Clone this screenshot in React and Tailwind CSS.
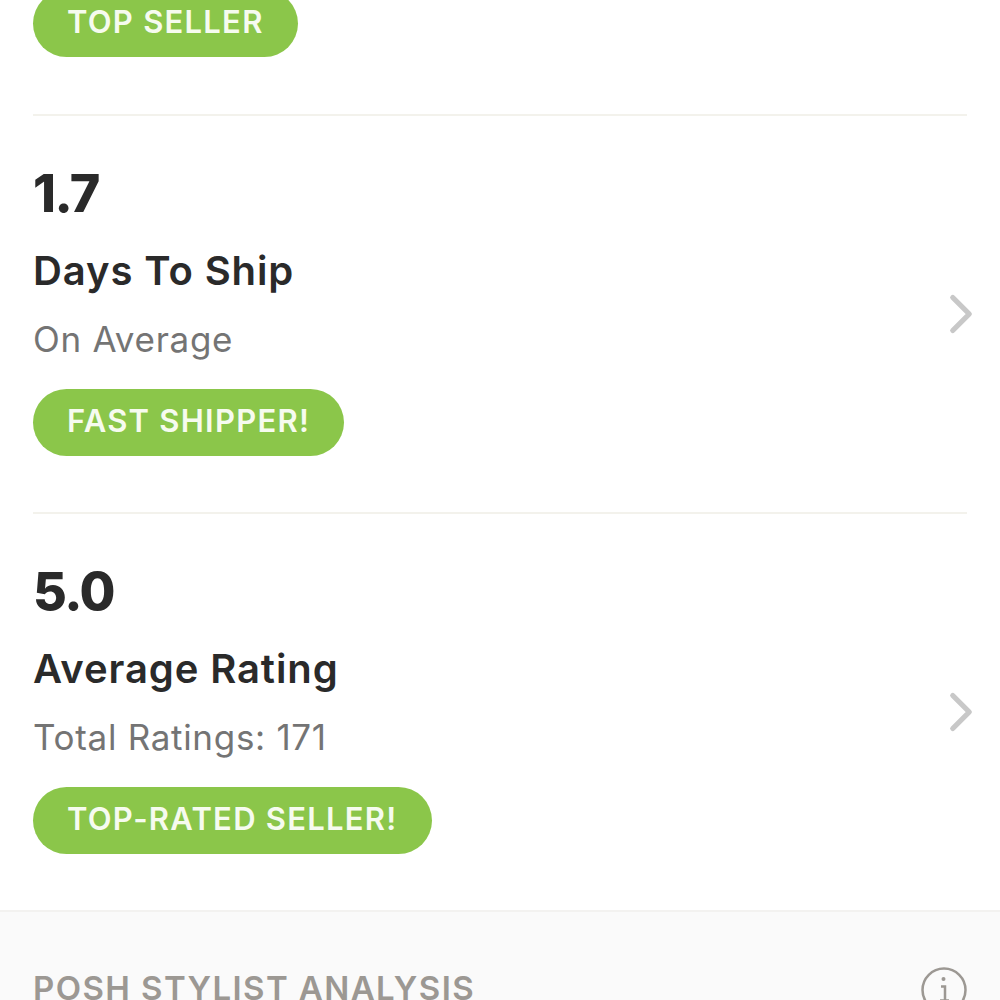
import { ChevronRight } from 'lucide-react'

const STATS = [
  { value: '1.7', title: 'Days To Ship', sub: 'On Average', badge: 'FAST SHIPPER!' },
  { value: '5.0', title: 'Average Rating', sub: 'Total Ratings: 171', badge: 'TOP-RATED SELLER!' },
]

function Badge({ children }) {
  return (
    <span className="inline-flex h-[67px] items-center rounded-full bg-[#8bc64a] px-[34px] pb-[3px] text-[31px] font-semibold tracking-[1.25px] text-[#f6fbef]">
      {children}
    </span>
  )
}

function StatRow({ stat }) {
  return (
    <div className="relative flex h-[398px] flex-col items-start border-t-2 border-[#f3f2ec] pt-[48px]">
      <div className="h-[60px] text-[52px] leading-[60px] font-extrabold tracking-[-1.5px] text-[#2a2a2a]">{stat.value}</div>
      <div className="mt-[23px] h-[48px] text-[40px] leading-[48px] font-semibold tracking-[0.9px] text-[#2a2a2a]">{stat.title}</div>
      <div className="mt-[22px] h-[44px] text-[35px] leading-[44px] tracking-[0.7px] text-[#747474]">{stat.sub}</div>
      <div className="mt-[28px]">
        <Badge>{stat.badge}</Badge>
      </div>
      <ChevronRight
        className="absolute top-[165px] right-[-27px] h-[66px] w-[66px] text-[#c8c8c8]"
        strokeWidth={1.9}
      />
    </div>
  )
}

export default function App() {
  return (
    <div className="h-[1000px] w-[1000px] overflow-hidden bg-white font-['Inter','Liberation_Sans',sans-serif]">
      <div className="px-[33px]">
        <div className="mt-[-10px] h-[124px]">
          <Badge>TOP SELLER</Badge>
        </div>
        {STATS.map((stat) => (
          <StatRow key={stat.value} stat={stat} />
        ))}
      </div>

      {/* Analysis section, cut off by the fold */}
      <div className="flex h-[200px] justify-between border-t-2 border-[#f3f2f0] bg-[#fafafa] pt-[56px] pr-[33px] pl-[33px]">
        <div className="text-[33px] leading-[40px] font-semibold tracking-[1.4px] text-[#9c9893]">
          POSH STYLIST ANALYSIS
        </div>
        <svg viewBox="0 0 46 46" className="mt-[-1px] h-[46px] w-[46px] text-[#9c9893]" fill="none" stroke="currentColor">
          <circle cx="23" cy="23" r="21.5" strokeWidth="2.5" />
          <path d="M20 19.5h4v14M19 33.5h9" strokeWidth="2.5" />
          <circle cx="22.5" cy="12" r="2" fill="currentColor" stroke="none" />
        </svg>
      </div>
    </div>
  )
}
